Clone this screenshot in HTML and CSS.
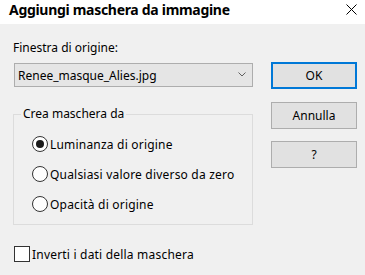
FILE: index.html
```html
<!DOCTYPE html>
<html lang="it">
<head>
    <meta charset="UTF-8">
    <title>Aggiungi maschera da immagine</title>
    <link rel="stylesheet" href="styles.css">
</head>
<body>
    <div class="dialog">
        <div class="titlebar">
            <span class="title">Aggiungi maschera da immagine</span>
            <svg class="close" width="11" height="11" viewBox="0 0 11 11">
                <path d="M0.5 0.5 L10.5 10.5 M10.5 0.5 L0.5 10.5" stroke="#000" stroke-width="1" fill="none"/>
            </svg>
        </div>

        <div class="content">
            <div class="left">
                <div class="label">Finestra di origine:</div>
                <div class="combo">
                    <span>Renee_masque_Alies.jpg</span>
                    <svg class="chevron" width="8" height="5" viewBox="0 0 8 5">
                        <path d="M0.5 0.5 L4 4 L7.5 0.5" stroke="#606060" stroke-width="1" fill="none"/>
                    </svg>
                </div>

                <fieldset class="group">
                    <legend>Crea maschera da</legend>
                    <label class="option">
                        <input type="radio" name="source" checked>
                        <span>Luminanza di origine</span>
                    </label>
                    <label class="option">
                        <input type="radio" name="source">
                        <span>Qualsiasi valore diverso da zero</span>
                    </label>
                    <label class="option">
                        <input type="radio" name="source">
                        <span>Opacità di origine</span>
                    </label>
                </fieldset>

                <label class="check">
                    <input type="checkbox">
                    <span>Inverti i dati della maschera</span>
                </label>
            </div>

            <div class="buttons">
                <button class="btn btn-default">OK</button>
                <button class="btn">Annulla</button>
                <button class="btn">?</button>
            </div>
        </div>
    </div>
</body>
</html>
```

FILE: styles.css
```css
* {
    box-sizing: border-box;
}

body {
    margin: 0;
    font-family: 'Noto Sans', 'Open Sans', sans-serif;
    font-size: 12px;
    color: #000;
}

.dialog {
    width: 365px;
    height: 275px;
    background-color: #f0f0f0;
}

.titlebar {
    height: 24px;
    background-color: #fff;
    display: flex;
    align-items: center;
    justify-content: space-between;
    padding: 0 8px 0 9px;
}

.title {
    font-size: 14px;
    font-weight: bold;
    letter-spacing: -0.3px;
    line-height: 20px;
    margin-top: -5px;
}

.close {
    margin-top: -5px;
}

.content {
    display: flex;
    padding: 16px 0 0 13px;
}

.left {
    width: 240px;
}

.label {
    line-height: 16px;
}

.combo {
    margin: 7px 0 0 1px;
    height: 24px;
    border: 1px solid #adadad;
    background-color: #e5e5e5;
    display: flex;
    align-items: center;
    justify-content: space-between;
    padding: 0 6px 0 3px;
}

.chevron {
    margin-top: -1px;
}

.group {
    margin: 19px 0 0 0;
    padding: 7px 0 5px 18px;
    border: 1px solid #dcdcdc;
    min-width: 0;
}

.group legend {
    margin-left: -11px;
    padding: 0 2px;
    line-height: 16px;
}

.option,
.check {
    display: flex;
    align-items: center;
    height: 30px;
    letter-spacing: 0.2px;
}

.option input,
.check input {
    appearance: none;
    margin: 0 2px 0 0;
    background-color: #fff;
    border: 1px solid #333;
}

.option input {
    width: 16px;
    height: 16px;
    border-radius: 50%;
    display: flex;
    align-items: center;
    justify-content: center;
}

.option input:checked::after {
    content: "";
    width: 8px;
    height: 8px;
    border-radius: 50%;
    background-color: #1a1a1a;
}

.check {
    margin: 19px 0 0 1px;
    height: 20px;
}

.check input {
    width: 16px;
    height: 16px;
}

.buttons {
    display: flex;
    flex-direction: column;
    margin: 22px 0 0 18px;
}

.btn {
    width: 86px;
    height: 27px;
    margin-bottom: 12px;
    border: 1px solid #adadad;
    background-color: #e1e1e1;
    font-family: inherit;
    font-size: 12px;
    color: #000;
    padding: 0;
}

.btn-default {
    border: 2px solid #0078d7;
    margin-bottom: 13px;
}
```
